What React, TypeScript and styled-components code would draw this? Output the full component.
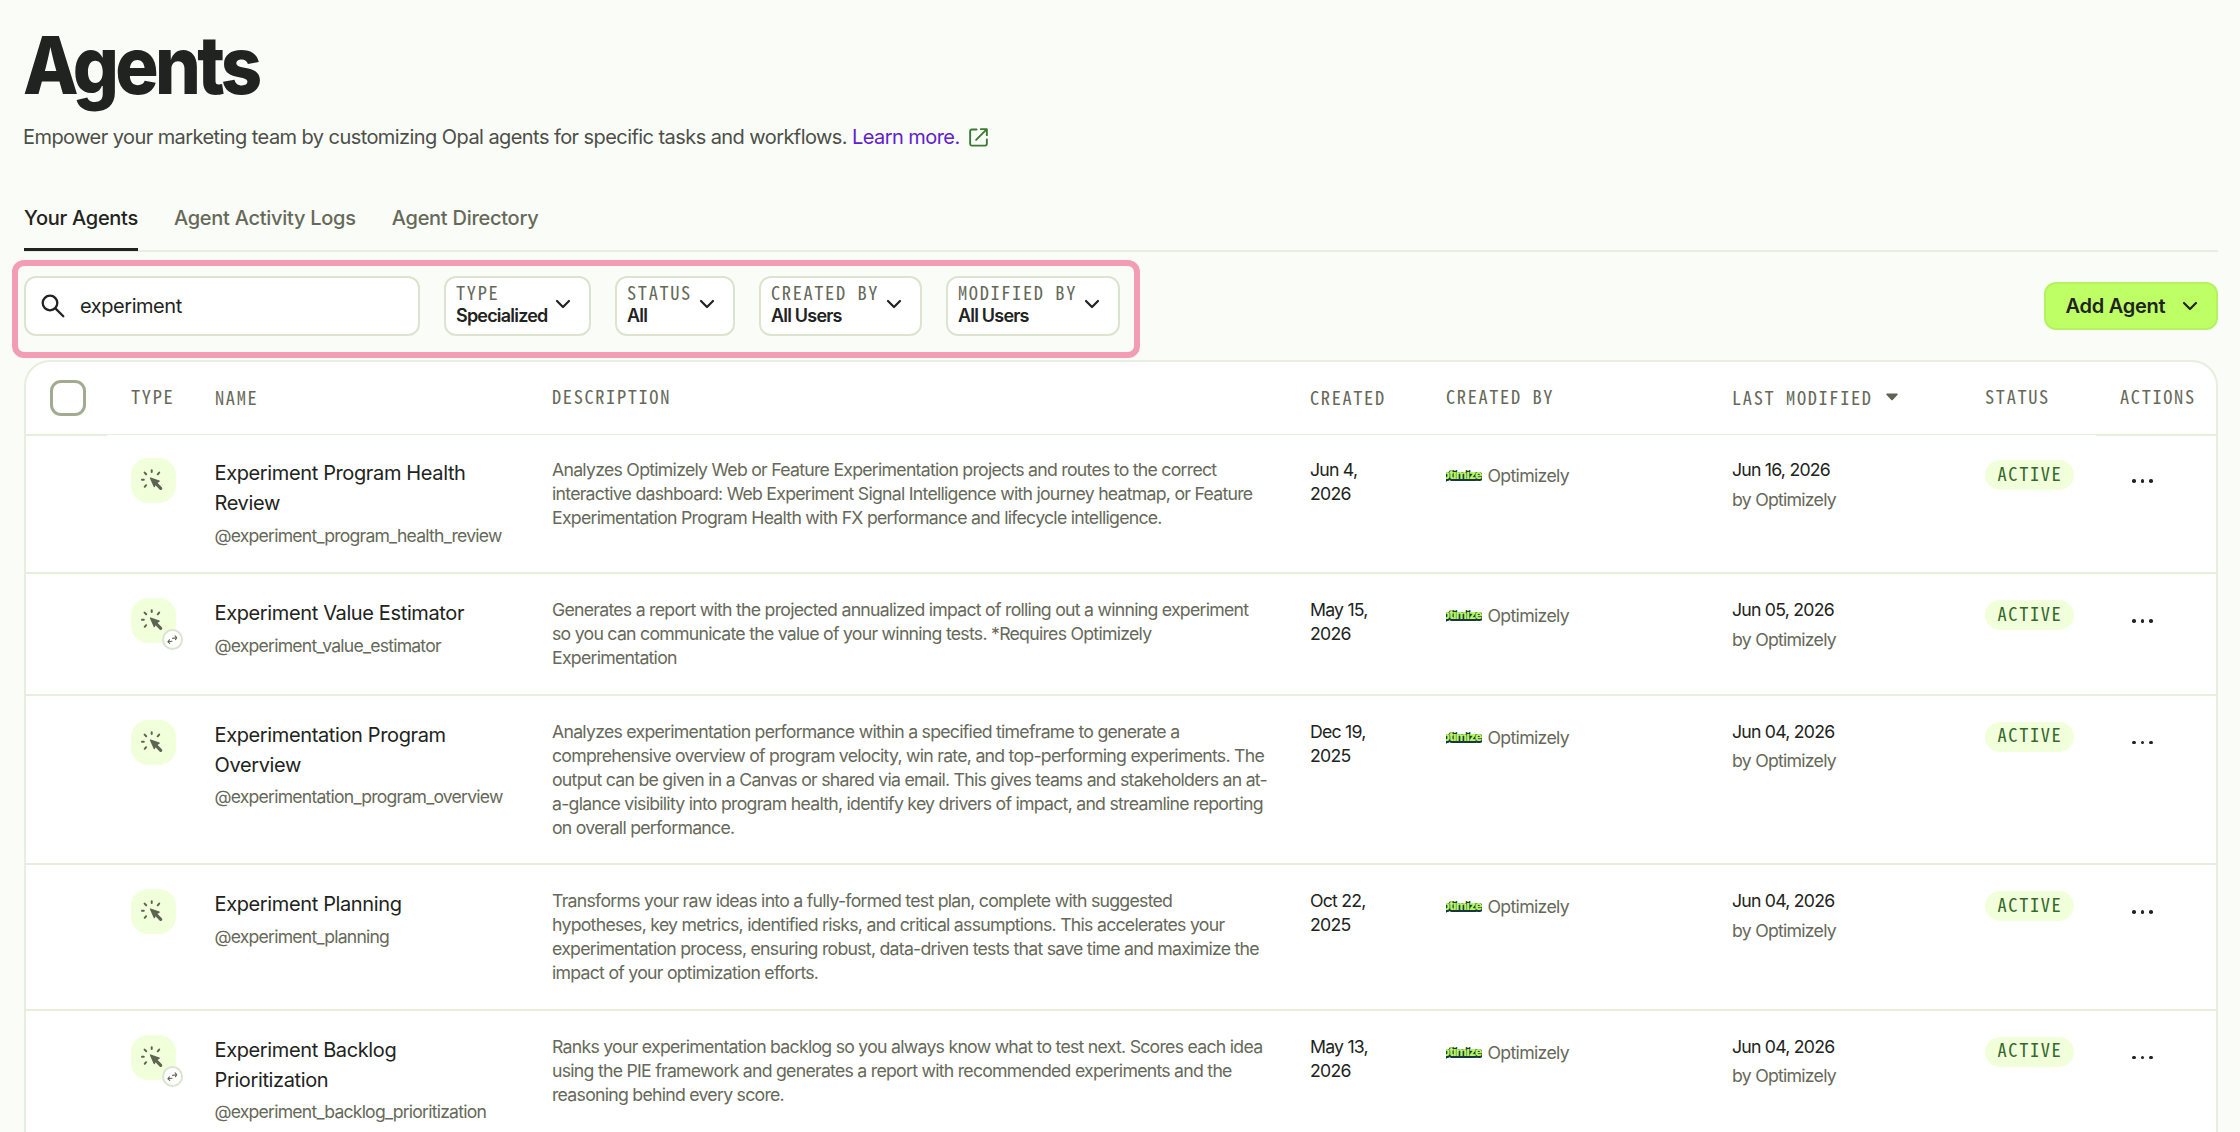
import React from "react";
import styled, { createGlobalStyle } from "styled-components";

const c = {
  page: "#fafcf7",
  ink: "#212320",
  muted: "#666959",
  body: "#4c4f48",
  line: "#e6eedd",
  control: "#dce4d0",
  tint: "#f1ffdb",
  lime: "#bfff66",
  green: "#35692c",
  link: "#5f20d0",
  pink: "#f39cb6",
};

const Global = createGlobalStyle`
  *, *::before, *::after { box-sizing: border-box; }
  html, body { margin: 0; background: ${c.page}; }
  body { height: 1132px; overflow: hidden; font-family: Inter, "Liberation Sans", sans-serif; color: ${c.ink}; }
  h1, p { margin: 0; font-weight: 400; }
  svg { display: block; flex: none; }
`;

const Page = styled.main`
  padding: 25px 22px 0 24px;
`;

const Title = styled.h1`
  && { font-weight: 850; }
  margin-left: -1.5px;
  font-size: 80px;
  line-height: 80px;
  letter-spacing: -4px;
  transform: scaleX(0.903);
  transform-origin: 0 50%;
`;

const Subtitle = styled.p`
  display: flex;
  align-items: center;
  margin-top: 20px;
  height: 24px;
  margin-left: -1px;
  font-size: 20px;
  line-height: 24px;
  letter-spacing: -0.57px;
  color: ${c.body};
  white-space: pre;
`;

const LearnMore = styled.a`
  color: ${c.link};
  margin-right: 9px;
`;

const TabList = styled.nav`
  display: flex;
  gap: 36px;
  margin-top: 57px;
  height: 46px;
  border-bottom: 2px solid ${c.line};
`;

const Tab = styled.a<{ $active?: boolean }>`
  height: 45px;
  font-size: 20px;
  line-height: 24px;
  font-weight: 500;
  letter-spacing: -0.27px;
  color: ${(p) => (p.$active ? c.ink : c.muted)};
  border-bottom: 3px solid ${(p) => (p.$active ? c.ink : "transparent")};
`;

const Toolbar = styled.div`
  display: flex;
  align-items: center;
  justify-content: space-between;
  margin-top: 24px;
`;

const Filters = styled.div`
  position: relative;
  display: flex;
  gap: 24px;
`;

const Highlight = styled.div`
  position: absolute;
  inset: -16px -20px -22px -12px;
  border: 6px solid ${c.pink};
  border-radius: 12px;
  pointer-events: none;
`;

const SearchBox = styled.div`
  display: flex;
  align-items: center;
  width: 396px;
  height: 60px;
  padding-left: 15px;
  border: 2px solid ${c.control};
  border-radius: 12px;
  background: #fff;
`;

const SearchText = styled.span`
  margin-left: 15px;
  font-size: 20px;
  line-height: 24px;
  letter-spacing: -0.45px;
`;

const Select = styled.button<{ $width: number }>`
  display: flex;
  align-items: flex-start;
  justify-content: space-between;
  width: ${(p) => p.$width}px;
  height: 60px;
  padding: 5px 14px 0 10px;
  border: 2px solid ${c.control};
  border-radius: 12px;
  background: #fff;
  font-family: inherit;
  color: ${c.ink};
  text-align: left;

  svg { margin-top: 9px; }
`;

const mono = `
  font-family: "Noto Sans Mono CJK SC", "Liberation Mono", monospace;
  font-size: 18.4px;
  letter-spacing: 1.62px;
  white-space: pre;
`;

const SelectLabel = styled.div`
  ${mono}
  line-height: 18px;
  margin: 0 -8px 4px 0;
  color: ${c.muted};
`;

const SelectValue = styled.div`
  font-size: 18px;
  line-height: 21px;
  font-weight: 600;
  letter-spacing: -0.8px;
`;

const AddButton = styled.button`
  display: flex;
  align-items: center;
  gap: 13px;
  width: 174px;
  height: 48px;
  padding: 0 0 0 19.5px;
  border: 2px solid #b3f35f;
  border-radius: 12px;
  background: ${c.lime};
  font: 600 20px/24px Inter, "Liberation Sans", sans-serif;
  letter-spacing: -0.25px;
  color: ${c.ink};
`;

const Table = styled.section`
  margin-top: 24px;
  border: 2px solid ${c.line};
  border-radius: 26px 26px 0 0;
  background: #fff;
`;

const Columns = styled.div`
  display: grid;
  grid-template-columns: 81px 84px 337px 758px 136px 286px 253px 135px 120px;
`;

const HeaderRow = styled(Columns)`
  position: relative;
  z-index: 1;
  height: 72px;
`;

const HeaderCell = styled.div<{ $rule?: number; $lift?: number }>`
  ${mono}
  display: flex;
  align-items: center;
  line-height: 24px;
  padding-left: 24px;
  padding-bottom: ${(p) => p.$lift ?? 4}px;
  color: ${c.muted};
  box-shadow: 0 ${(p) => p.$rule ?? 1}px 0 ${c.line};
`;

const Checkbox = styled.span`
  width: 36px;
  height: 36px;
  border: 3px solid #a3aa90;
  border-radius: 11px;
`;

const SortArrow = styled.svg`
  margin-left: 13px;
`;

const Row = styled(Columns)`
  border-bottom: 2px solid ${c.line};
  padding: 24px 0 23.5px;
`;

const Cell = styled.div`
  padding-left: 24px;
`;

const Tile = styled.div`
  position: relative;
  width: 45px;
  height: 45px;
  border-radius: 17px;
  background: ${c.tint};
`;

const Badge = styled.span`
  position: absolute;
  left: 31px;
  top: 31px;
  width: 21px;
  height: 21px;
  border: 2px solid ${c.control};
  border-radius: 50%;
  background: #fff;
`;

const Name = styled.div`
  margin-left: -0.5px;
  font-size: 20px;
  line-height: 30px;
  letter-spacing: -0.37px;
  white-space: pre-line;
`;

const Handle = styled.div`
  margin: 5.5px 0 1px -0.5px;
  font-size: 17.6px;
  line-height: 24px;
  letter-spacing: -0.78px;
  color: ${c.muted};
`;

const Description = styled.p`
  font-size: 17.7px;
  line-height: 24px;
  letter-spacing: -0.74px;
  color: ${c.muted};
  white-space: pre;
`;

const DateText = styled.div`
  font-size: 17.7px;
  line-height: 24px;
  letter-spacing: -0.78px;
  white-space: pre-line;
`;

const Byline = styled.div`
  margin-top: 5.5px;
  font-size: 17.7px;
  line-height: 24px;
  letter-spacing: -0.75px;
  color: ${c.muted};
`;

const Creator = styled.div`
  display: flex;
  align-items: center;
  gap: 5.5px;
  padding-top: 6px;
  font-size: 17.7px;
  line-height: 24px;
  letter-spacing: -0.68px;
  color: ${c.muted};
`;

const Pill = styled.span`
  ${mono}
  display: flex;
  align-items: center;
  width: 89px;
  height: 30px;
  margin-top: 2px;
  padding: 0 0 4.5px 12.5px;
  line-height: 24px;
  border-radius: 15px;
  background: ${c.tint};
  color: ${c.green};
`;

const MoreButton = styled.div`
  display: flex;
  gap: 5px;
  padding: 21px 0 0 12px;
`;

const Dot = styled.i`
  width: 3.6px;
  height: 3.6px;
  border-radius: 50%;
  background: ${c.ink};
`;

const Chevron = () => (
  <svg width="24" height="24" viewBox="0 0 24 24" fill="none" stroke={c.ink} strokeWidth="2.2" strokeLinecap="round" strokeLinejoin="round">
    <path d="M6 9l6 6 6-6" />
  </svg>
);

const SearchIcon = () => (
  <svg width="24" height="24" viewBox="0 0 24 24" fill="none" stroke={c.ink} strokeWidth="2.3" strokeLinecap="round">
    <circle cx="9" cy="9" r="7.3" />
    <path d="M14.4 14.4L22.3 22.3" />
  </svg>
);

const ExternalIcon = () => (
  <svg width="19" height="19" viewBox="0 0 20 20" fill="none" stroke="#3c7a33" strokeWidth="2" strokeLinecap="round" strokeLinejoin="round">
    <path d="M8 1.5H3A1.8 1.8 0 0 0 1.2 3.3v13.4A1.8 1.8 0 0 0 3 18.5h14a1.8 1.8 0 0 0 1.8-1.8V12" />
    <path d="M12.5 1.2h6.3v6.3M18.5 1.5L7.5 12.5" />
  </svg>
);

const CursorIcon = () => (
  <svg width="45" height="45" viewBox="0 0 45 45" fill="none" stroke="#5f6353" strokeWidth="2" strokeLinecap="round">
    <path d="M20.7 12.2v1.8M28.2 14.6l-1.5 1.7M13.6 14.6l1.6 1.7M11 21.7h1.8M13.7 28.8l1.4-1.6" />
    <path d="M19.6 20.2l8.5 2.9-3.1 1.9-1.7 3.5z" fill="#5f6353" strokeWidth="1.4" strokeLinejoin="round" />
    <path d="M23.5 24l6.2 6.4" strokeWidth="3.2" />
  </svg>
);

const SyncIcon = () => (
  <svg width="17" height="17" viewBox="0 0 17 17" fill="none" stroke="#5f6353" strokeWidth="1.1" strokeLinecap="round" strokeLinejoin="round">
    <path d="M8.6 7.4l3.9-.7M11.1 4.9l1.6 1.7-1.2 2" />
    <path d="M8 10.2l-3.9.6M5.4 8.8l-1.5 2 1.8 1.6" />
  </svg>
);

const BrandMark = () => (
  <svg width="36" height="12" viewBox="0 0 36 12" overflow="hidden" fontFamily="Roboto, Inter, sans-serif" fontWeight="900" fontSize="12.4">
    <g strokeLinejoin="round">
      <text x="-3.5" y="10" textLength="39" lengthAdjust="spacingAndGlyphs" fill="#17363f" stroke="#17363f" strokeWidth="2.2">ptimize</text>
      <text x="-3.5" y="9.3" textLength="39" lengthAdjust="spacingAndGlyphs" fill="#b8f562">ptimize</text>
    </g>
  </svg>
);

interface Agent {
  name: string;
  handle: string;
  description: string;
  created: string;
  modified: string;
  synced?: boolean;
}

const agents: Agent[] = [
  {
    name: "Experiment Program Health\nReview",
    handle: "@experiment_program_health_review",
    description:
      "Analyzes Optimizely Web or Feature Experimentation projects and routes to the correct\ninteractive dashboard: Web Experiment Signal Intelligence with journey heatmap, or Feature\nExperimentation Program Health with FX performance and lifecycle intelligence.",
    created: "Jun 4,\n2026",
    modified: "Jun 16, 2026",
  },
  {
    name: "Experiment Value Estimator",
    handle: "@experiment_value_estimator",
    description:
      "Generates a report with the projected annualized impact of rolling out a winning experiment\nso you can communicate the value of your winning tests. *Requires Optimizely\nExperimentation",
    created: "May 15,\n2026",
    modified: "Jun 05, 2026",
    synced: true,
  },
  {
    name: "Experimentation Program\nOverview",
    handle: "@experimentation_program_overview",
    description:
      "Analyzes experimentation performance within a specified timeframe to generate a\ncomprehensive overview of program velocity, win rate, and top-performing experiments. The\noutput can be given in a Canvas or shared via email. This gives teams and stakeholders an at-\na-glance visibility into program health, identify key drivers of impact, and streamline reporting\non overall performance.",
    created: "Dec 19,\n2025",
    modified: "Jun 04, 2026",
  },
  {
    name: "Experiment Planning",
    handle: "@experiment_planning",
    description:
      "Transforms your raw ideas into a fully-formed test plan, complete with suggested\nhypotheses, key metrics, identified risks, and critical assumptions. This accelerates your\nexperimentation process, ensuring robust, data-driven tests that save time and maximize the\nimpact of your optimization efforts.",
    created: "Oct 22,\n2025",
    modified: "Jun 04, 2026",
  },
  {
    name: "Experiment Backlog\nPrioritization",
    handle: "@experiment_backlog_prioritization",
    description:
      "Ranks your experimentation backlog so you always know what to test next. Scores each idea\nusing the PIE framework and generates a report with recommended experiments and the\nreasoning behind every score.",
    created: "May 13,\n2026",
    modified: "Jun 04, 2026",
    synced: true,
  },
];

const filters = [
  { label: "TYPE", value: "Specialized", width: 147 },
  { label: "STATUS", value: "All", width: 120 },
  { label: "CREATED BY", value: "All Users", width: 163 },
  { label: "MODIFIED BY", value: "All Users", width: 174 },
];

export default function App() {
  return (
    <>
      <Global />
      <Page>
        <Title>Agents</Title>
        <Subtitle>
          <span>Empower your marketing team by customizing Opal agents for specific tasks and workflows. </span>
          <LearnMore>Learn more.</LearnMore>
          <ExternalIcon />
        </Subtitle>
        <TabList>
          <Tab $active>Your Agents</Tab>
          <Tab>Agent Activity Logs</Tab>
          <Tab>Agent Directory</Tab>
        </TabList>
        <Toolbar>
          <Filters>
            <SearchBox>
              <SearchIcon />
              <SearchText>experiment</SearchText>
            </SearchBox>
            {filters.map((f) => (
              <Select key={f.label} $width={f.width}>
                <div>
                  <SelectLabel>{f.label}</SelectLabel>
                  <SelectValue>{f.value}</SelectValue>
                </div>
                <Chevron />
              </Select>
            ))}
            <Highlight />
          </Filters>
          <AddButton>
            Add Agent
            <Chevron />
          </AddButton>
        </Toolbar>
        <Table>
          <HeaderRow>
            <HeaderCell $rule={2} $lift={0}>
              <Checkbox />
            </HeaderCell>
            <HeaderCell>TYPE</HeaderCell>
            <HeaderCell $lift={2}>NAME</HeaderCell>
            <HeaderCell>DESCRIPTION</HeaderCell>
            <HeaderCell $lift={2}>CREATED</HeaderCell>
            <HeaderCell>CREATED BY</HeaderCell>
            <HeaderCell $lift={2}>
              LAST MODIFIED
              <SortArrow width="12" height="8" viewBox="0 0 12 8" fill="#5f6353">
                <path d="M1 .5h10a.8.8 0 0 1 .6 1.3L6.7 7a1 1 0 0 1-1.4 0L.4 1.8A.8.8 0 0 1 1 .5z" />
              </SortArrow>
            </HeaderCell>
            <HeaderCell>STATUS</HeaderCell>
            <HeaderCell $rule={2}>ACTIONS</HeaderCell>
          </HeaderRow>
          {agents.map((a) => (
            <Row key={a.handle}>
              <Cell />
              <Cell>
                <Tile>
                  <CursorIcon />
                  {a.synced && (
                    <Badge>
                      <SyncIcon />
                    </Badge>
                  )}
                </Tile>
              </Cell>
              <Cell>
                <Name>{a.name}</Name>
                <Handle>{a.handle}</Handle>
              </Cell>
              <Cell>
                <Description>{a.description}</Description>
              </Cell>
              <Cell>
                <DateText>{a.created}</DateText>
              </Cell>
              <Cell>
                <Creator>
                  <BrandMark />
                  Optimizely
                </Creator>
              </Cell>
              <Cell>
                <DateText>{a.modified}</DateText>
                <Byline>by Optimizely</Byline>
              </Cell>
              <Cell>
                <Pill>ACTIVE</Pill>
              </Cell>
              <Cell>
                <MoreButton>
                  <Dot />
                  <Dot />
                  <Dot />
                </MoreButton>
              </Cell>
            </Row>
          ))}
        </Table>
      </Page>
    </>
  );
}
